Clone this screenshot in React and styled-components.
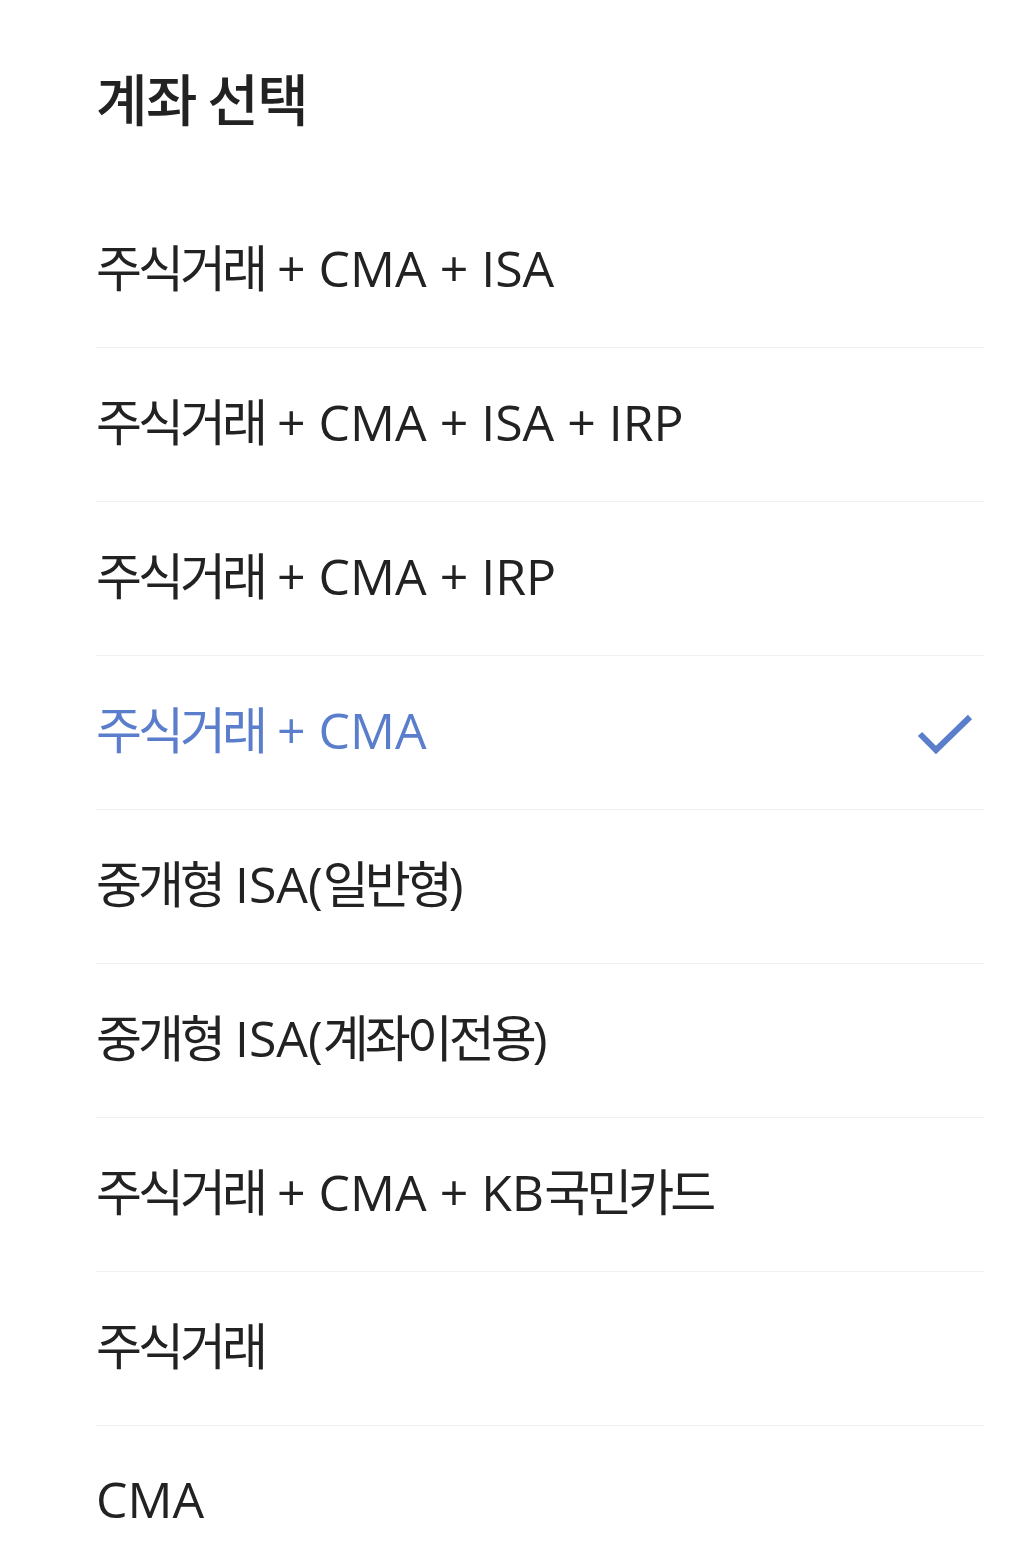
import React, { useState } from 'react';
import styled, { createGlobalStyle } from 'styled-components';

const GlobalStyle = createGlobalStyle`
  html, body {
    margin: 0;
    padding: 0;
    background: #ffffff;
  }
  body {
    font-family: "Open Sans", "Noto Sans CJK KR", sans-serif;
    color: #222222;
  }
`;

const Sheet = styled.div`
  padding: 0 48px 0 96px;
  background: #ffffff;
`;

const Title = styled.h1`
  margin: 0;
  height: 194px;
  display: flex;
  align-items: center;
  font-family: "Noto Sans CJK KR", sans-serif;
  font-size: 56px;
  font-weight: 500;
  color: #222222;
  letter-spacing: -1.5px;
  line-height: 1;
`;

const List = styled.ul`
  list-style: none;
  margin: 0;
  padding: 0;
`;

const Row = styled.li`
  height: 154px;
  box-sizing: border-box;
  padding-bottom: 8px;
  display: flex;
  align-items: center;
  justify-content: space-between;
  border-bottom: 1px solid ${(p) => (p.$last ? 'transparent' : '#f1f1f1')};
  cursor: pointer;
`;

const Label = styled.span`
  font-size: 50px;
  font-weight: 400;
  line-height: 1.2;
  color: ${(p) => (p.$active ? '#5a7ecb' : '#222222')};
  white-space: pre;
`;

const Hangul = styled.span`
  font-family: "Noto Sans CJK KR", sans-serif;
  letter-spacing: -4px;
`;

const Check = styled.svg`
  width: 60px;
  height: 50px;
  margin: 12px 10px 0 0;
  flex-shrink: 0;
`;

const accounts = [
  '주식거래 + CMA + ISA',
  '주식거래 + CMA + ISA + IRP',
  '주식거래 + CMA + IRP',
  '주식거래 + CMA',
  '중개형 ISA(일반형)',
  '중개형 ISA(계좌이전용)',
  '주식거래 + CMA + KB국민카드',
  '주식거래',
  'CMA',
];

// hangul runs get the CJK face with tighter tracking, the rest stays latin
const splitRuns = (text) => text.split(/([\uAC00-\uD7A3]+)/).filter(Boolean);

export default function App() {
  const [selected, setSelected] = useState(3);

  return (
    <>
      <GlobalStyle />
      <Sheet>
        <Title>계좌 선택</Title>
        <List>
          {accounts.map((name, i) => (
            <Row key={name} $last={i === accounts.length - 1} onClick={() => setSelected(i)}>
              <Label $active={i === selected}>
                {splitRuns(name).map((run, j) =>
                  /[\uAC00-\uD7A3]/.test(run) ? <Hangul key={j}>{run}</Hangul> : run
                )}
              </Label>
              {i === selected && (
                <Check viewBox="0 0 60 50">
                  <polyline
                    points="6,24 22,40 56,7"
                    fill="none"
                    stroke="#5a7ecb"
                    strokeWidth="6"
                    strokeLinecap="butt"
                    strokeLinejoin="miter"
                  />
                </Check>
              )}
            </Row>
          ))}
        </List>
      </Sheet>
    </>
  );
}
